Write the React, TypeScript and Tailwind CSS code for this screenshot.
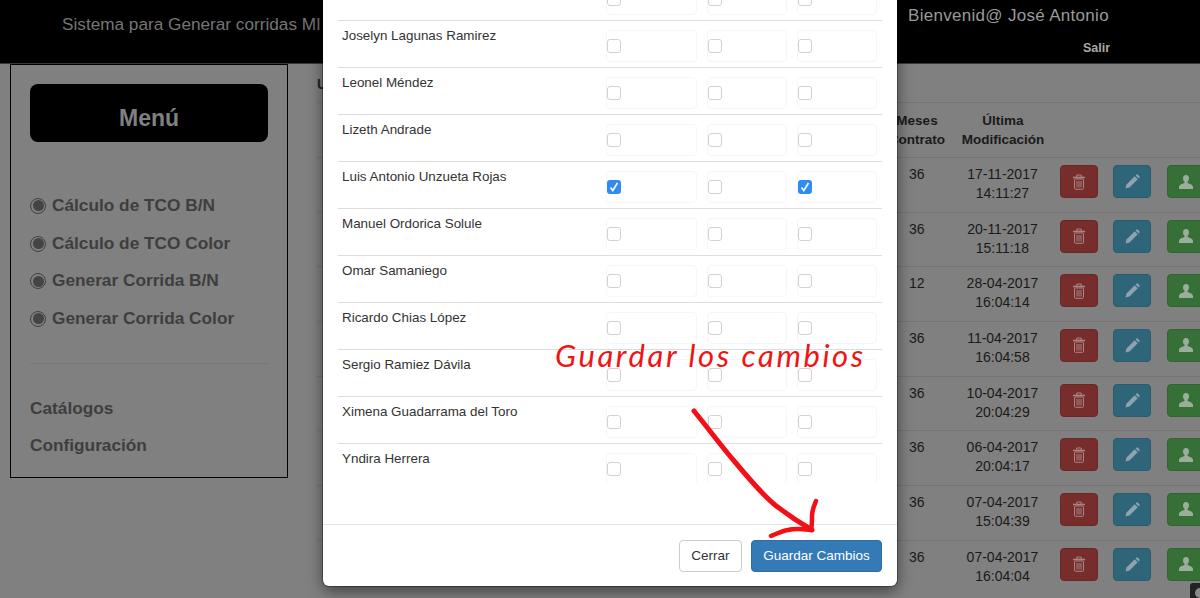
import React from "react";

const rows = [
  ["36", "17-11-2017", "14:11:27"],
  ["36", "20-11-2017", "15:11:18"],
  ["12", "28-04-2017", "16:04:14"],
  ["36", "11-04-2017", "16:04:58"],
  ["36", "10-04-2017", "20:04:29"],
  ["36", "06-04-2017", "20:04:17"],
  ["36", "07-04-2017", "15:04:39"],
  ["36", "07-04-2017", "16:04:04"],
];

const people: [string, boolean, boolean, boolean][] = [
  ["", false, false, false],
  ["Joselyn Lagunas Ramirez", false, false, false],
  ["Leonel Méndez", false, false, false],
  ["Lizeth Andrade", false, false, false],
  ["Luis Antonio Unzueta Rojas", true, false, true],
  ["Manuel Ordorica Solule", false, false, false],
  ["Omar Samaniego", false, false, false],
  ["Ricardo Chias López", false, false, false],
  ["Sergio Ramiez Dávila", false, false, false],
  ["Ximena Guadarrama del Toro", false, false, false],
  ["Yndira Herrera", false, false, false],
];

function Trash() {
  return (
    <svg width="14" height="16" viewBox="0 0 14 16" fill="none" stroke="#a98685" strokeWidth="1">
      <path d="M1 3.500h12" strokeWidth="1.600" />
      <path d="M4.800 3V1h4.400v2" />
      <rect x="2.500" y="5" width="9" height="10.300" rx="1" />
      <path d="M5 7v6.500M7 7v6.500M9 7v6.500" />
    </svg>
  );
}

function Pencil() {
  return (
    <svg width="15" height="15" viewBox="0 0 15 15" fill="#8ea3ad">
      <path d="M0.500 14.500l1-4L9.700 2.300l3 3L4.500 13.500z" />
      <path d="M10.600 1.400l1-1c.3-.3.7-.3 1 0l2 2c.3.3.3.7 0 1l-1 1z" />
    </svg>
  );
}

function User() {
  return (
    <svg width="14" height="14" viewBox="0 0 14 14" fill="#9bae9b">
      <path d="M7 0c2 0 3 1.500 3 3.400 0 1.500-.7 2.800-1.500 3.400v1c0 .6 5.500 1.500 5.500 4.100V14H0v-2.100c0-2.600 5.500-3.500 5.500-4.100v-1C4.700 6.200 4 4.900 4 3.400 4 1.500 5 0 7 0z" />
    </svg>
  );
}

function Check({ on }: { on: boolean }) {
  return on ? (
    <span className="flex h-[14px] w-[14px] items-center justify-center rounded-[3px] bg-[#2f8cf3]">
      <svg width="10" height="10" viewBox="0 0 10 10" fill="none" stroke="#fff" strokeWidth="1.600">
        <path d="M1.500 5.500l2.300 3L8.500 1" />
      </svg>
    </span>
  ) : (
    <span className="block h-[14px] w-[14px] rounded-[3px] border-[1.5px] border-[#d2d2d2] bg-white" />
  );
}

function Box({ w, on }: { w: string; on: boolean }) {
  return (
    <div className={`mt-[9px] flex h-[32px] items-center rounded-[4px] border border-[#f6f6f6] ${w}`}>
      <Check on={on} />
    </div>
  );
}

function MenuItem({ label }: { label: string }) {
  return (
    <div className="flex h-[37.700px] items-center gap-[6px] text-[17.250px] font-bold text-[#3e3e3e]">
      <span className="flex h-[16px] w-[16px] items-center justify-center rounded-full border border-[#404040]">
        <span className="block h-[11px] w-[11px] rounded-full bg-[#444444]" />
      </span>
      {label}
    </div>
  );
}

export default function App() {
  return (
    <div className="relative flex h-[598px] w-full flex-col overflow-hidden bg-[#808080] font-['Liberation_Sans',Arial,sans-serif]">
      <header className="flex h-[64px] shrink-0 justify-between border-b border-[#3a3a3a] bg-black">
        <div className="pl-[62px] pt-[15px] text-[17.200px] leading-[18px] text-[#757575]">Sistema para Generar corridas MI</div>
        <div className="w-[292px]">
          <div className="pt-[6px] text-[17px] leading-[20px] tracking-[0.3px] text-[#9a9a9a]">Bienvenid@ José Antonio</div>
          <div className="pl-[175px] pt-[15px] text-[12.500px] font-bold leading-[14px] text-[#a8a8a8]">Salir</div>
        </div>
      </header>

      <div className="flex flex-1">
        <aside className="ml-[10px] h-[414px] w-[278px] shrink-0 border border-black px-[19px] pt-[19px]">
          <div className="flex h-[58px] items-center justify-center rounded-[8px] bg-black pt-[10px] text-[23px] font-bold text-[#808080]">Menú</div>
          <div className="mt-[45px]">
            <MenuItem label="Cálculo de TCO B/N" />
            <MenuItem label="Cálculo de TCO Color" />
            <MenuItem label="Generar Corrida B/N" />
            <MenuItem label="Generar Corrida Color" />
          </div>
          <div className="mt-[25px] border-t border-[#777777]" />
          <div className="mt-[26px] text-[17.250px] font-bold text-[#3e3e3e]">
            <div className="flex h-[37.700px] items-center">Catálogos</div>
            <div className="flex h-[37.700px] items-center">Configuración</div>
          </div>
        </aside>

        <main className="ml-[29px] w-[888px] shrink-0 text-[14px] text-[#1a1a1a]">
          <div className="h-[38px] pt-[10px] font-bold leading-[20px] text-[#222222]">U</div>
          <div className="flex h-[55px] border-t border-[#747474] pl-[566px] font-bold leading-[19px] text-[#1a1a1a]">
            <div className="w-[68px] pt-[8px] text-center text-[13.500px]">Meses<br />Contrato</div>
            <div className="w-[104px] pt-[8px] text-center text-[13.500px]">Última<br />Modificación</div>
          </div>
          {rows.map((r, i) => (
            <div key={i} className="flex h-[54.670px] border-t border-[#747474] pl-[566px] leading-[19px]">
              <div className="w-[68px] pt-[7px] text-center">{r[0]}</div>
              <div className="w-[104px] pt-[7px] text-center">{r[1]}<br />{r[2]}</div>
              <div className="ml-[5.500px] flex gap-[15.670px] pt-[7px]">
                <div className="flex h-[33px] w-[38px] items-center justify-center rounded-[4px] border border-[#6b2725] bg-[#772d2c]"><Trash /></div>
                <div className="flex h-[33px] w-[38px] items-center justify-center rounded-[4px] border border-[#2a5b6e] bg-[#2f6579]"><Pencil /></div>
                <div className="flex h-[33px] w-[38px] items-center justify-center rounded-[4px] border border-[#316431] bg-[#377037]"><User /></div>
              </div>
            </div>
          ))}
        </main>
      </div>

      <div className="absolute bottom-0 right-0 flex h-[15px] w-[10px] items-end overflow-hidden rounded-tl-[3px] bg-[#222222]">
        <span className="ml-[5px] block h-[10px] w-[10px] shrink-0 rounded-full bg-[#8a8a8a]" />
      </div>

      <div className="absolute left-[323px] top-0 flex h-[586px] w-[574px] flex-col rounded-b-[6px] bg-white shadow-[0_5px_15px_rgba(0,0,0,0.5)] ring-1 ring-black/30">
        <div className="h-[483px] shrink-0 overflow-hidden px-[15px]">
          <div className="-mt-[27px]">
            {people.map((p, i) => (
              <div key={i} className="flex h-[47px] border-t border-[#dddddd]">
                <div className="w-[268px] pl-[4px] pt-[5px] text-[13.400px] leading-[20px] text-[#333333]">{p[0]}</div>
                <Box w="w-[91px]" on={p[1]} />
                <div className="w-[10px]" />
                <Box w="w-[80px]" on={p[2]} />
                <div className="w-[10px]" />
                <Box w="w-[80px]" on={p[3]} />
              </div>
            ))}
          </div>
        </div>
        <div className="flex-1" />
        <div className="flex h-[62px] shrink-0 justify-end gap-[9px] border-t border-[#e5e5e5] pr-[15px] pt-[15px] text-[13.500px]">
          <button className="h-[32px] w-[63px] rounded-[4px] border border-[#cccccc] bg-white text-[#333333]">Cerrar</button>
          <button className="h-[32px] w-[131px] rounded-[4px] border border-[#2e6da4] bg-[#337ab7] text-white">Guardar Cambios</button>
        </div>
      </div>

      <div className="absolute left-[555px] top-[336px] whitespace-nowrap font-['Lato',sans-serif] text-[31px] font-normal italic leading-[38px] tracking-[2.600px] text-[#f01414]">Guardar los cambios</div>

      <svg className="pointer-events-none absolute left-0 top-0" width="1200" height="598" fill="none" stroke="#f40f16" strokeLinecap="round" strokeLinejoin="round">
        <path d="M694 411C708 428 722 447 735 462C750 480 763 495 775 505C788 515 800 523 812 530" strokeWidth="5" />
        <path d="M816 501C814 506 812 510 812 516C812 521 812 526 811 530C803 529 795 528 788 530C782 531 776 534 771 536" strokeWidth="4.500" />
      </svg>
    </div>
  );
}
